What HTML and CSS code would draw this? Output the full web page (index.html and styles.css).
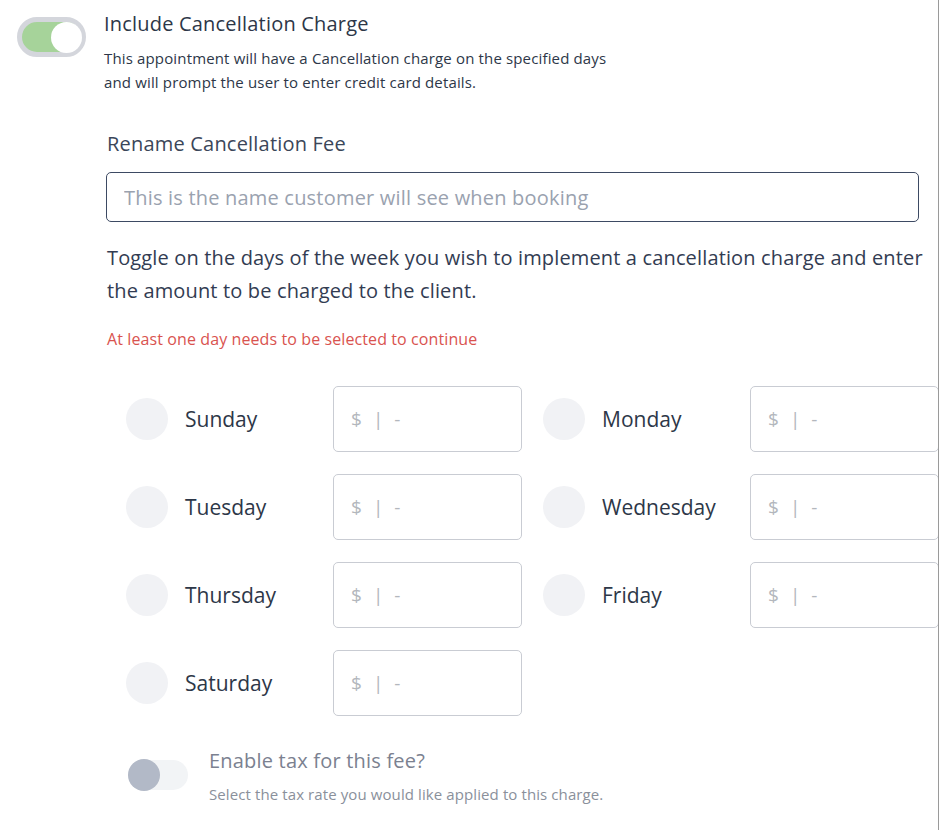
FILE: index.html
```html
<!DOCTYPE html>
<html lang="en">
<head>
  <meta charset="UTF-8" />
  <title>Cancellation Charge</title>
  <link rel="stylesheet" href="styles.css">
</head>
<body>
  <div class="page">
    <div class="header">
      <div class="switch on"><span class="knob"></span></div>
      <div class="header-text">
        <div class="title">Include Cancellation Charge</div>
        <div class="desc">
          This appointment will have a Cancellation charge on the specified days<br>
          and will prompt the user to enter credit card details.
        </div>
      </div>
    </div>

    <div class="content">
      <label class="label">Rename Cancellation Fee</label>
      <input class="name-input" type="text" placeholder="This is the name customer will see when booking">

      <p class="intro">Toggle on the days of the week you wish to implement a cancellation charge and enter the amount to be charged to the client.</p>
      <div class="error">At least one day needs to be selected to continue</div>

      <div class="days">
        <div class="day"><span class="dot"></span><span class="day-name">Sunday</span><div class="amount"><span>$</span><span class="bar">|</span><span>-</span></div></div>
        <div class="day"><span class="dot"></span><span class="day-name">Monday</span><div class="amount"><span>$</span><span class="bar">|</span><span>-</span></div></div>
        <div class="day"><span class="dot"></span><span class="day-name">Tuesday</span><div class="amount"><span>$</span><span class="bar">|</span><span>-</span></div></div>
        <div class="day"><span class="dot"></span><span class="day-name">Wednesday</span><div class="amount"><span>$</span><span class="bar">|</span><span>-</span></div></div>
        <div class="day"><span class="dot"></span><span class="day-name">Thursday</span><div class="amount"><span>$</span><span class="bar">|</span><span>-</span></div></div>
        <div class="day"><span class="dot"></span><span class="day-name">Friday</span><div class="amount"><span>$</span><span class="bar">|</span><span>-</span></div></div>
        <div class="day"><span class="dot"></span><span class="day-name">Saturday</span><div class="amount"><span>$</span><span class="bar">|</span><span>-</span></div></div>
      </div>

      <div class="tax">
        <div class="switch off"><span class="knob"></span></div>
        <div class="tax-text">
          <div class="tax-title">Enable tax for this fee?</div>
          <div class="tax-desc">Select the tax rate you would like applied to this charge.</div>
        </div>
      </div>
    </div>
  </div>
</body>
</html>
```

FILE: styles.css
```css
body {
  margin: 0;
  font-family: 'Open Sans', 'Lato', sans-serif;
  background: #fff;
  color: #2d3748;
}

.page {
  width: 939px;
  height: 830px;
  box-sizing: border-box;
  border-right: 1px solid #9a9a9a;
  overflow: hidden;
}

.header {
  display: flex;
  padding: 11px 0 0 17px;
}

.switch.on {
  width: 69px;
  height: 40px;
  box-sizing: border-box;
  margin-top: 6px;
  border: 5px solid #d4d6dc;
  border-radius: 20px;
  background: #a6d39a;
  display: flex;
  align-items: center;
  justify-content: flex-end;
}

.switch.on .knob {
  width: 31px;
  height: 31px;
  border-radius: 50%;
  background: #fff;
  margin-right: -1px;
}

.header-text {
  margin-left: 18px;
}

.title {
  font-size: 20px;
  letter-spacing: 0.2px;
  line-height: 26px;
  color: #2d3748;
}

.desc {
  margin-top: 9px;
  font-size: 15px;
  letter-spacing: 0.15px;
  line-height: 24px;
  color: #2d3748;
}

.content {
  padding-left: 106px;
}

.label {
  display: block;
  margin-top: 37px;
  padding-left: 1px;
  font-size: 20px;
  letter-spacing: 0.2px;
  line-height: 26px;
  color: #3b4659;
}

.name-input {
  display: block;
  margin-top: 15px;
  width: 813px;
  height: 50px;
  box-sizing: border-box;
  border: 1px solid #3d4a63;
  border-radius: 5px;
  padding: 0 17px;
  font-family: inherit;
  font-size: 20px;
  letter-spacing: 0.2px;
  color: #2d3748;
  outline: none;
}

.name-input::placeholder {
  color: #9aa2af;
}

.intro {
  margin: 19px 0 0;
  padding-left: 1px;
  width: 822px;
  font-size: 20px;
  letter-spacing: 0.15px;
  line-height: 33px;
  font-weight: 500;
  color: #323c52;
}

.error {
  margin-top: 22px;
  padding-left: 1px;
  font-size: 16px;
  letter-spacing: 0.1px;
  line-height: 20px;
  color: #d9534f;
}

.days {
  display: grid;
  grid-template-columns: 396px 396px;
  column-gap: 21px;
  row-gap: 22px;
  margin-top: 37px;
  padding-left: 20px;
}

.day {
  display: flex;
  align-items: center;
  height: 66px;
}

.dot {
  width: 42px;
  height: 42px;
  border-radius: 50%;
  background: #f1f2f5;
  flex-shrink: 0;
}

.day-name {
  margin-left: 17px;
  width: 150px;
  font-size: 21px;
  color: #2d3748;
}

.amount {
  width: 189px;
  height: 66px;
  box-sizing: border-box;
  border: 1px solid #c9ccd3;
  border-radius: 5px;
  display: flex;
  align-items: center;
  gap: 11px;
  padding-left: 17px;
  font-size: 19px;
  color: #b3b7bd;
  flex-shrink: 0;
}

.tax {
  display: flex;
  margin-top: 32px;
  padding-left: 22px;
}

.switch.off {
  width: 60px;
  height: 30px;
  margin-top: 12px;
  border-radius: 15px;
  background: #f2f4f6;
  display: flex;
  align-items: center;
}

.switch.off .knob {
  width: 32px;
  height: 32px;
  border-radius: 50%;
  background: #b2b9c7;
}

.tax-text {
  margin-left: 21px;
}

.tax-title {
  font-size: 20px;
  letter-spacing: 0.2px;
  line-height: 26px;
  color: #7b8190;
}

.tax-desc {
  margin-top: 10px;
  font-size: 15px;
  letter-spacing: 0.1px;
  line-height: 20px;
  color: #8a909b;
}
```
